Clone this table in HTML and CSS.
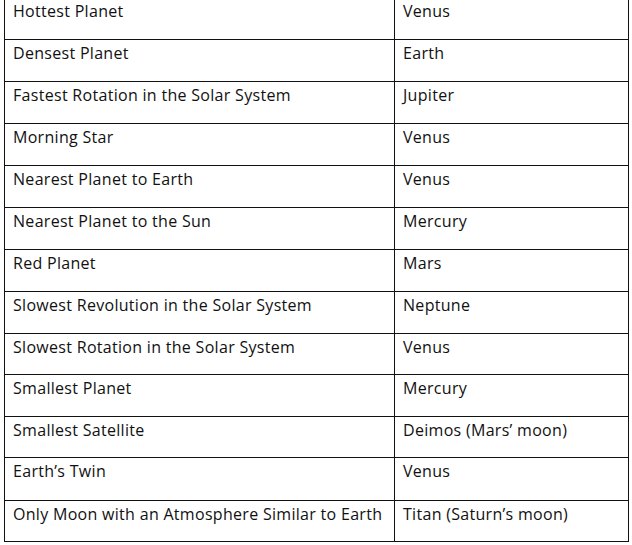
FILE: index.html
```html
<!DOCTYPE html>
<html>
<head>
<meta charset="utf-8">
<link rel="stylesheet" href="styles.css">
</head>
<body>
<table class="facts">
  <tr><td class="k">Hottest Planet</td><td class="v">Venus</td></tr>
  <tr><td class="k">Densest Planet</td><td class="v">Earth</td></tr>
  <tr><td class="k">Fastest Rotation in the Solar System</td><td class="v">Jupiter</td></tr>
  <tr><td class="k">Morning Star</td><td class="v">Venus</td></tr>
  <tr><td class="k">Nearest Planet to Earth</td><td class="v">Venus</td></tr>
  <tr><td class="k">Nearest Planet to the Sun</td><td class="v">Mercury</td></tr>
  <tr><td class="k">Red Planet</td><td class="v">Mars</td></tr>
  <tr><td class="k">Slowest Revolution in the Solar System</td><td class="v">Neptune</td></tr>
  <tr class="short"><td class="k">Slowest Rotation in the Solar System</td><td class="v">Venus</td></tr>
  <tr><td class="k">Smallest Planet</td><td class="v">Mercury</td></tr>
  <tr class="short"><td class="k">Smallest Satellite</td><td class="v">Deimos (Mars’ moon)</td></tr>
  <tr class="tall"><td class="k">Earth’s Twin</td><td class="v">Venus</td></tr>
  <tr class="short"><td class="k">Only Moon with an Atmosphere Similar to Earth</td><td class="v">Titan (Saturn’s moon)</td></tr>
</table>
</body>
</html>
```
FILE: styles.css
```css
html, body {
  margin: 0;
  padding: 0;
  background: #fff;
}
.facts {
  margin: -3px 0 0 4px;
  width: 624px;
  border-collapse: collapse;
  table-layout: fixed;
}
.facts td {
  border: 1px solid #111;
  height: 42px;
  box-sizing: border-box;
  vertical-align: top;
  padding: 3px 0 0 8px;
  font-family: "Open Sans", sans-serif;
  font-size: 16px;
  letter-spacing: 0.3px;
  line-height: 20px;
  color: #111;
  white-space: nowrap;
}
.facts .short td { height: 41px; }
.facts .tall td { height: 43px; }
.facts td.k { width: 390px; }
.facts td.v { width: 234px; }
```
